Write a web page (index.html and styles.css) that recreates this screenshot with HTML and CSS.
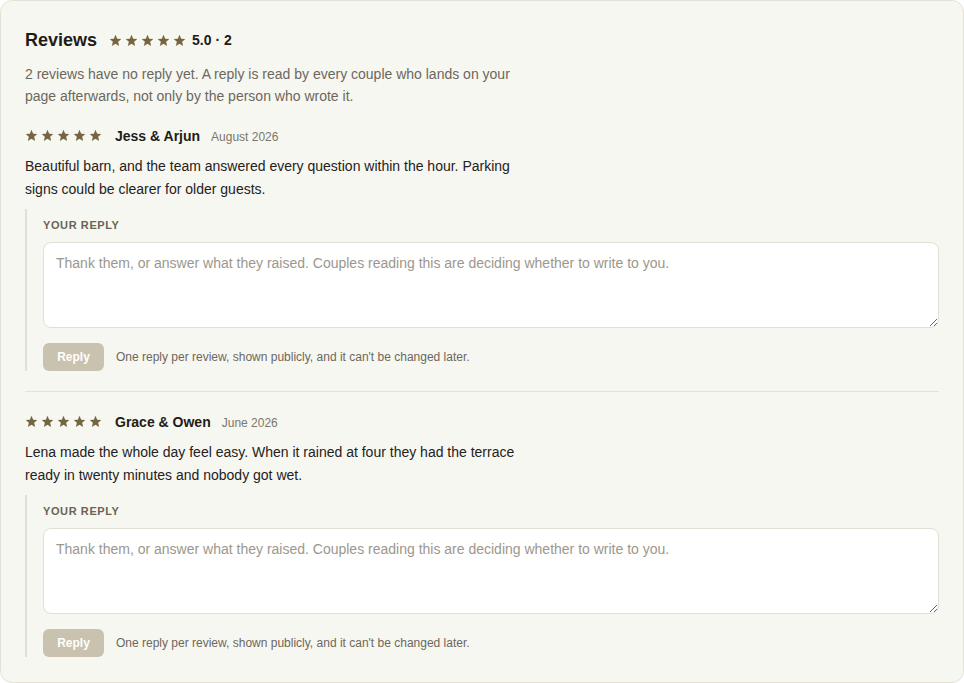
FILE: index.html
```html
<!DOCTYPE html>
<html lang="en">
<head>
    <title>Reviews</title>
    <meta content="width=device-width, initial-scale=1" name="viewport" />
    <link rel="stylesheet" href="styles.css">
</head>
<body>
    <svg width="0" height="0" style="position:absolute">
        <symbol id="star" viewBox="0 0 24 24">
            <path d="M12 1.5l3.1 7.1 7.6.7-5.8 5.1 1.8 7.6L12 18l-6.7 4 1.8-7.6L1.3 9.3l7.6-.7z" />
        </symbol>
    </svg>
    <section class="reviews-card">
        <div class="reviews-head">
            <h2>Reviews</h2>
            <span class="stars">
                <svg><use href="#star"/></svg><svg><use href="#star"/></svg><svg><use href="#star"/></svg><svg><use href="#star"/></svg><svg><use href="#star"/></svg>
            </span>
            <span class="score">5.0 · 2</span>
        </div>
        <p class="intro">2 reviews have no reply yet. A reply is read by every couple who lands on your page afterwards, not only by the person who wrote it.</p>

        <div class="review">
            <div class="review-meta">
                <span class="stars">
                    <svg><use href="#star"/></svg><svg><use href="#star"/></svg><svg><use href="#star"/></svg><svg><use href="#star"/></svg><svg><use href="#star"/></svg>
                </span>
                <span class="author">Jess &amp; Arjun</span>
                <span class="date">August 2026</span>
            </div>
            <p class="review-text">Beautiful barn, and the team answered every question within the hour. Parking signs could be clearer for older guests.</p>
            <div class="reply-box">
                <label class="reply-label" for="reply1">Your reply</label>
                <textarea id="reply1" placeholder="Thank them, or answer what they raised. Couples reading this are deciding whether to write to you."></textarea>
                <div class="reply-actions">
                    <button class="reply-btn" disabled>Reply</button>
                    <span class="reply-note">One reply per review, shown publicly, and it can't be changed later.</span>
                </div>
            </div>
        </div>

        <div class="review">
            <div class="review-meta">
                <span class="stars">
                    <svg><use href="#star"/></svg><svg><use href="#star"/></svg><svg><use href="#star"/></svg><svg><use href="#star"/></svg><svg><use href="#star"/></svg>
                </span>
                <span class="author">Grace &amp; Owen</span>
                <span class="date">June 2026</span>
            </div>
            <p class="review-text">Lena made the whole day feel easy. When it rained at four they had the terrace ready in twenty minutes and nobody got wet.</p>
            <div class="reply-box">
                <label class="reply-label" for="reply2">Your reply</label>
                <textarea id="reply2" placeholder="Thank them, or answer what they raised. Couples reading this are deciding whether to write to you."></textarea>
                <div class="reply-actions">
                    <button class="reply-btn" disabled>Reply</button>
                    <span class="reply-note">One reply per review, shown publicly, and it can't be changed later.</span>
                </div>
            </div>
        </div>
    </section>
</body>
</html>
```

FILE: styles.css
```css
body {
    margin: 0;
    background: #fff;
    font-family: 'Liberation Sans', Arial, sans-serif;
    color: #24211c;
}
.reviews-card {
    background: #f7f7f1;
    border: 1px solid #e4e2d6;
    border-radius: 12px;
    padding: 24px 24px 24px 24px;
    height: 683px;
    box-sizing: border-box;
}
.reviews-head {
    display: flex;
    align-items: center;
    height: 30px;
}
.reviews-head h2 {
    margin: 0 12px 0 0;
    font-size: 18px;
    font-weight: bold;
    color: #1f1c17;
}
.stars {
    display: inline-flex;
    gap: 3px;
    fill: #76653f;
}
.stars svg {
    width: 13px;
    height: 13px;
}
.score {
    margin-left: 6px;
    font-size: 14px;
    font-weight: bold;
    color: #1f1c17;
}
.intro {
    margin: 8px 0 0 0;
    max-width: 500px;
    font-size: 14px;
    line-height: 22px;
    color: #6c675d;
}
.review {
    padding: 18px 0 20px 0;
    border-bottom: 1px solid #e4e2d6;
}
.review:last-child {
    border-bottom: none;
    padding-bottom: 0;
}
.review + .review {
    padding-top: 19px;
}
.review-meta {
    display: flex;
    align-items: baseline;
    height: 20px;
    line-height: 20px;
}
.review-meta .stars {
    align-self: center;
}
.review-meta .author {
    margin-left: 13px;
    font-size: 14px;
    font-weight: bold;
    color: #1f1c17;
    position: relative;
    top: 1px;
}
.review-meta .date {
    margin-left: 11px;
    font-size: 12px;
    color: #7a766d;
    position: relative;
    top: 1px;
}
.review-text {
    margin: 10px 0 0 0;
    max-width: 500px;
    font-size: 14px;
    line-height: 23px;
    color: #24211c;
}
.reply-box {
    margin-top: 8px;
    border-left: 2px solid #e2dfd4;
    padding: 8px 0 0 16px;
    display: flex;
    flex-direction: column;
}
.reply-label {
    font-size: 11px;
    font-weight: bold;
    text-transform: uppercase;
    letter-spacing: 0.6px;
    color: #6b6354;
    line-height: 16px;
}
.reply-box textarea {
    margin-top: 9px;
    height: 86px;
    box-sizing: border-box;
    border: 1px solid #e2dfd4;
    border-radius: 8px;
    background: #fff;
    padding: 10px 12px;
    font-family: inherit;
    font-size: 14px;
    line-height: 20px;
    color: #24211c;
}
.reply-box textarea::placeholder {
    color: #9c978d;
}
.reply-actions {
    display: flex;
    align-items: center;
    gap: 12px;
    margin-top: 15px;
}
.reply-btn {
    width: 61px;
    height: 28px;
    border: none;
    border-radius: 6px;
    background: #c9c2ae;
    color: #fff;
    font-family: inherit;
    font-size: 12px;
    font-weight: bold;
}
.reply-note {
    font-size: 12px;
    color: #6c675d;
}
```
